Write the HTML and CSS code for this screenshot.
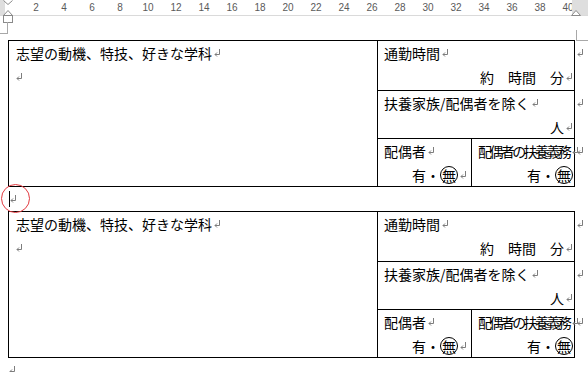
FILE: index.html
```html
<!DOCTYPE html>
<html lang="ja">
<head>
<meta charset="utf-8">
<title>履歴書 表</title>
<link rel="stylesheet" href="styles.css">
</head>
<body>
<div class="ruler">
  <div class="ruler-shade ruler-shade-left"></div>
  <div class="ruler-scale">
    <span>2</span><span>4</span><span>6</span><span>8</span><span>10</span><span>12</span><span>14</span><span>16</span><span>18</span><span>20</span><span>22</span><span>24</span><span>26</span><span>28</span><span>30</span><span>32</span><span>34</span><span>36</span><span>38</span><span>40</span>
  </div>
  <div class="ruler-shade ruler-shade-right"></div>
  <svg class="indent-marker" viewBox="0 0 14 24"><path d="M3.5 0.5 L8 4.5 L12.5 0.5" /><path d="M3.5 15.5 L8 10.5 L12.5 15.5 Z" /><rect x="3.5" y="15.5" width="9" height="7" /></svg>
  <svg class="right-marker" viewBox="0 0 12 8"><path d="M0.5 6.5 L5 1.5 L9.5 6.5 Z" /></svg>
</div>

<div class="page">
  <div class="corner corner-left"></div>
  <div class="corner corner-right"></div>

  <div class="tbl-wrap">
    <div class="tbl">
      <div class="cell cell-main">
        <div class="line">志望の動機、特技、好きな学科<svg class="pm" viewBox="0 0 7 8"><path d="M5.5 0v5.5H1M3 3.5 1 5.5 3 7.5"/></svg></div>
        <div class="line"><svg class="pm pm-first" viewBox="0 0 7 8"><path d="M5.5 0v5.5H1M3 3.5 1 5.5 3 7.5"/></svg></div>
      </div>
      <div class="cell cell-wide">
        <div class="line">通勤時間<svg class="pm" viewBox="0 0 7 8"><path d="M5.5 0v5.5H1M3 3.5 1 5.5 3 7.5"/></svg></div>
        <div class="line right">約　時間　分<svg class="pm" viewBox="0 0 7 8"><path d="M5.5 0v5.5H1M3 3.5 1 5.5 3 7.5"/></svg></div>
      </div>
      <div class="cell cell-wide">
        <div class="line">扶養家族/配偶者を除く<svg class="pm" viewBox="0 0 7 8"><path d="M5.5 0v5.5H1M3 3.5 1 5.5 3 7.5"/></svg></div>
        <div class="line right">人<svg class="pm" viewBox="0 0 7 8"><path d="M5.5 0v5.5H1M3 3.5 1 5.5 3 7.5"/></svg></div>
      </div>
      <div class="cell cell-sub">
        <div class="line">配偶者<svg class="pm" viewBox="0 0 7 8"><path d="M5.5 0v5.5H1M3 3.5 1 5.5 3 7.5"/></svg></div>
        <div class="line right pad-mark">有・<span class="circ">無</span><svg class="pm" viewBox="0 0 7 8"><path d="M5.5 0v5.5H1M3 3.5 1 5.5 3 7.5"/></svg></div>
      </div>
      <div class="cell cell-sub">
        <div class="line squeeze">配偶者の扶養義務<svg class="pm" viewBox="0 0 7 8"><path d="M5.5 0v5.5H1M3 3.5 1 5.5 3 7.5"/></svg></div>
        <div class="line right">有・<span class="circ">無</span></div>
      </div>
    </div>
    <div class="row-marks">
      <div class="line"><svg class="pm pm-first" viewBox="0 0 7 8"><path d="M5.5 0v5.5H1M3 3.5 1 5.5 3 7.5"/></svg></div>
      <div class="line"><svg class="pm pm-first" viewBox="0 0 7 8"><path d="M5.5 0v5.5H1M3 3.5 1 5.5 3 7.5"/></svg></div>
      <div class="line"><svg class="pm pm-first" viewBox="0 0 7 8"><path d="M5.5 0v5.5H1M3 3.5 1 5.5 3 7.5"/></svg></div>
    </div>
  </div>

  <div class="para">
    <span class="cursor"></span><svg class="pm pm-para" viewBox="0 0 7 8"><path d="M5.5 0v5.5H1M3 3.5 1 5.5 3 7.5"/></svg>
    <span class="red-ring"></span>
  </div>

  <div class="tbl-wrap">
    <div class="tbl">
      <div class="cell cell-main">
        <div class="line">志望の動機、特技、好きな学科<svg class="pm" viewBox="0 0 7 8"><path d="M5.5 0v5.5H1M3 3.5 1 5.5 3 7.5"/></svg></div>
        <div class="line"><svg class="pm pm-first" viewBox="0 0 7 8"><path d="M5.5 0v5.5H1M3 3.5 1 5.5 3 7.5"/></svg></div>
      </div>
      <div class="cell cell-wide">
        <div class="line">通勤時間<svg class="pm" viewBox="0 0 7 8"><path d="M5.5 0v5.5H1M3 3.5 1 5.5 3 7.5"/></svg></div>
        <div class="line right">約　時間　分<svg class="pm" viewBox="0 0 7 8"><path d="M5.5 0v5.5H1M3 3.5 1 5.5 3 7.5"/></svg></div>
      </div>
      <div class="cell cell-wide">
        <div class="line">扶養家族/配偶者を除く<svg class="pm" viewBox="0 0 7 8"><path d="M5.5 0v5.5H1M3 3.5 1 5.5 3 7.5"/></svg></div>
        <div class="line right">人<svg class="pm" viewBox="0 0 7 8"><path d="M5.5 0v5.5H1M3 3.5 1 5.5 3 7.5"/></svg></div>
      </div>
      <div class="cell cell-sub">
        <div class="line">配偶者<svg class="pm" viewBox="0 0 7 8"><path d="M5.5 0v5.5H1M3 3.5 1 5.5 3 7.5"/></svg></div>
        <div class="line right pad-mark">有・<span class="circ">無</span><svg class="pm" viewBox="0 0 7 8"><path d="M5.5 0v5.5H1M3 3.5 1 5.5 3 7.5"/></svg></div>
      </div>
      <div class="cell cell-sub">
        <div class="line squeeze">配偶者の扶養義務<svg class="pm" viewBox="0 0 7 8"><path d="M5.5 0v5.5H1M3 3.5 1 5.5 3 7.5"/></svg></div>
        <div class="line right">有・<span class="circ">無</span></div>
      </div>
    </div>
    <div class="row-marks">
      <div class="line"><svg class="pm pm-first" viewBox="0 0 7 8"><path d="M5.5 0v5.5H1M3 3.5 1 5.5 3 7.5"/></svg></div>
      <div class="line"><svg class="pm pm-first" viewBox="0 0 7 8"><path d="M5.5 0v5.5H1M3 3.5 1 5.5 3 7.5"/></svg></div>
      <div class="line"><svg class="pm pm-first" viewBox="0 0 7 8"><path d="M5.5 0v5.5H1M3 3.5 1 5.5 3 7.5"/></svg></div>
    </div>
  </div>

  <div class="para">
    <svg class="pm pm-para" viewBox="0 0 7 8"><path d="M5.5 0v5.5H1M3 3.5 1 5.5 3 7.5"/></svg>
  </div>
</div>
</body>
</html>
```

FILE: styles.css
```css
* { box-sizing: border-box; }

html, body {
  margin: 0;
  padding: 0;
  background: #ffffff;
  width: 588px;
  height: 372px;
  overflow: hidden;
}

body {
  font-family: "Noto Sans CJK JP", "Noto Sans", sans-serif;
  color: #000;
}

/* ---------- ruler ---------- */
.ruler {
  position: relative;
  display: flex;
  height: 16px;
  border-bottom: 1px solid #dadada;
  background: #fff;
}

.ruler-shade {
  flex: 0 0 auto;
  height: 15px;
  background: #dedede;
}
.ruler-shade-left { width: 5px; }
.ruler-shade-right { width: 16px; }

.ruler-scale {
  flex: 0 0 567px;
  width: 567px;
  display: flex;
  padding-left: 17px;
  padding-top: 2px;
  font-family: "Liberation Sans", Arial, sans-serif;
  font-size: 10px;
  line-height: 12px;
  color: #5a5a5a;
  overflow: visible;
}
.ruler-scale span {
  flex: 0 0 28px;
  text-align: center;
}

.indent-marker {
  position: absolute;
  left: 0;
  top: 0;
  width: 14px;
  height: 24px;
  fill: #fff;
  stroke: #8a8a8a;
  stroke-width: 1;
}

.right-marker {
  position: absolute;
  left: 571px;
  top: 9px;
  width: 12px;
  height: 8px;
  fill: #fff;
  stroke: #8a8a8a;
  stroke-width: 1;
}

/* ---------- page ---------- */
.page {
  position: relative;
  padding: 24px 0 0 8px;
}

.corner {
  position: absolute;
  border-color: #a8a8a8;
  border-style: solid;
  border-width: 0;
}
.corner-left {
  left: 0;
  top: 6px;
  width: 8px;
  height: 12px;
  border-right-width: 1px;
  border-bottom-width: 1px;
}
.corner-right {
  left: 576px;
  top: 14px;
  width: 12px;
  height: 11px;
  border-left-width: 1px;
  border-bottom-width: 1px;
}

/* ---------- table ---------- */
.tbl-wrap {
  display: flex;
  align-items: flex-start;
}

.tbl {
  display: grid;
  grid-template-columns: 368px 93px 102px;
  grid-template-rows: 49px 47px 47px;
  gap: 1px;
  background: #000;
  border: 1px solid #000;
  flex: 0 0 auto;
}

.cell {
  background: #fff;
  font-size: 14px;
  line-height: 24px;
  padding: 0 1px 0 6px;
  white-space: nowrap;
  overflow: visible;
}

.cell-main {
  grid-column: 1;
  grid-row: 1 / 4;
  padding-left: 7px;
}
.cell-wide { grid-column: 2 / 4; }
.cell-sub { grid-column: auto; }

.line { height: 24px; }
.right { text-align: right; }
.pad-mark { padding-right: 3px; }

.squeeze { letter-spacing: -2.6px; }
.squeeze .pm { margin-left: 3px; }

.circ {
  display: inline-block;
  width: 18px;
  height: 18px;
  border: 1px solid #000;
  border-radius: 50%;
  font-size: 14px;
  line-height: 16px;
  text-align: center;
  vertical-align: 0;
  letter-spacing: 0;
}

.row-marks {
  display: grid;
  grid-template-rows: 49px 47px 47px;
  gap: 1px;
  padding: 1px 0 0 2px;
  font-size: 14px;
  line-height: 24px;
}

/* paragraph mark */
.pm {
  width: 7px;
  height: 8px;
  fill: none;
  stroke: #7d7d7d;
  stroke-width: 1;
  vertical-align: 2px;
  margin-left: 2px;
}
.pm-first { margin-left: 0; }

/* ---------- paragraphs between / after tables ---------- */
.para {
  position: relative;
  display: flex;
  align-items: center;
  height: 24px;
  padding-left: 1px;
}
.para .pm-para {
  margin-left: 0;
  vertical-align: 0;
}

.cursor {
  display: block;
  width: 1px;
  height: 16px;
  background: #000;
}

.red-ring {
  position: absolute;
  left: -7px;
  top: -3px;
  width: 29px;
  height: 29px;
  border: 1px solid #e23a40;
  border-radius: 50%;
}
```
